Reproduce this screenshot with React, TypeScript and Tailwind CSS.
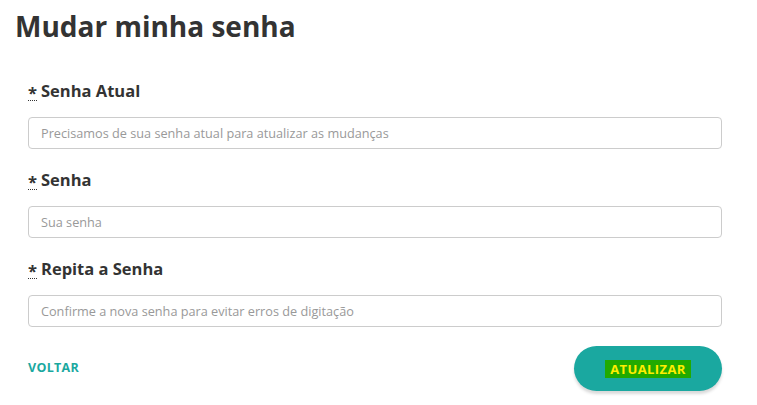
export default function App() {
  const fields = [
    { label: "Senha Atual", ph: "Precisamos de sua senha atual para atualizar as mudanças" },
    { label: "Senha", ph: "Sua senha" },
    { label: "Repita a Senha", ph: "Confirme a nova senha para evitar erros de digitação" },
  ];
  return (
    <div className="w-[757px] h-[405px] bg-white" style={{ fontFamily: '"Open Sans", sans-serif' }}>
      <h1 className="pl-[15px] pt-[8px] text-[28px] font-bold text-[#333] leading-[36px]">Mudar minha senha</h1>
      <div className="pl-[28px] pr-[35px] pt-[36px]">
        {fields.map((f, i) => (
          <div key={i} className="mb-[20px]">
            <label className="flex items-center text-[16.5px] font-bold text-[#333] leading-[22px] mb-[15px]">
              <abbr className="no-underline border-b border-dotted border-[#333] leading-[14px] mr-[4px] translate-y-[2px]" title="obrigatório">*</abbr>
              {f.label}
            </label>
            <input
              className="w-full h-[32px] border border-[#ccc] rounded-[4px] px-[12px] text-[12.7px] text-[#555] placeholder:text-[#999] outline-none"
              placeholder={f.ph}
              type="password"
            />
          </div>
        ))}
        <div className="flex items-center justify-between -mt-[1px]">
          <a className="text-[12.5px] font-bold text-[#1aa89f] tracking-[0.3px]">VOLTAR</a>
          <button className="w-[148px] h-[45px] rounded-full bg-[#1aa8a0] shadow-[0_3px_3px_rgba(0,0,0,0.15)] flex items-center justify-center">
            <span className="bg-[#21aa00] text-[#ffee00] text-[13px] font-bold px-[5px] leading-[18px] tracking-[0.4px]">ATUALIZAR</span>
          </button>
        </div>
      </div>
    </div>
  );
}
